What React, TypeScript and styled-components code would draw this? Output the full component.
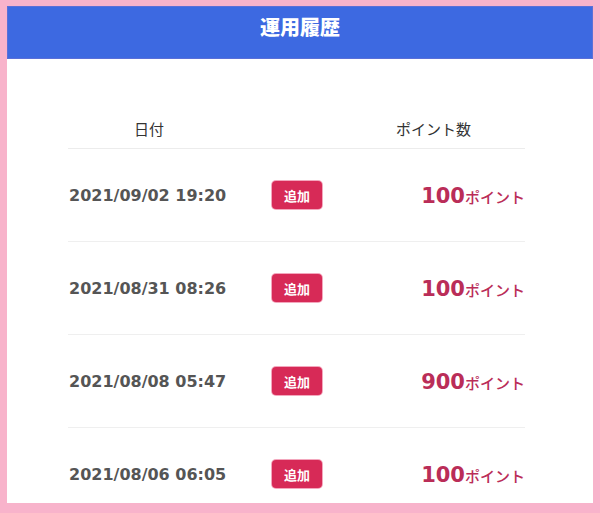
import React from "react";
import styled, { createGlobalStyle } from "styled-components";

const GlobalStyle = createGlobalStyle`
  html, body { margin: 0; padding: 0; }
  body {
    background: #f8b3cb;
    font-family: "Noto Sans CJK JP", "Noto Sans", sans-serif;
  }
`;

const Frame = styled.div`
  box-sizing: border-box;
  width: 600px;
  height: 513px;
  padding: 6px 7px 10px 7px;
  background: #f8b3cb;
`;

const Panel = styled.div`
  height: 100%;
  background: #ffffff;
  overflow: hidden;
  display: flex;
  flex-direction: column;
`;

const Header = styled.header`
  height: 53px;
  flex: none;
  background: #3d69e1;
  border: 1px solid #5a6fd8;
  box-sizing: border-box;
  display: flex;
  justify-content: center;
  align-items: flex-start;
  padding-top: 6px;
`;

const Title = styled.h1`
  margin: 0;
  color: #ffffff;
  font-family: "Noto Sans CJK JP", sans-serif;
  font-weight: 900;
  font-size: 20px;
  line-height: 28px;
`;

const Table = styled.div`
  margin: 51px 68px 0 61px;
`;

const HeadRow = styled.div`
  display: grid;
  grid-template-columns: 162px 1fr 183px;
  height: 39px;
  align-items: center;
  border-bottom: 1px solid #ececec;
  box-sizing: border-box;
`;

const HeadCell = styled.div<{ $col: number }>`
  grid-column: ${(p) => p.$col};
  text-align: center;
  font-family: "Noto Sans CJK JP", sans-serif;
  font-size: 15px;
  color: #333333;
  padding-bottom: 2px;
`;

const Row = styled.div`
  display: grid;
  grid-template-columns: 162px 1fr 183px;
  height: 93px;
  align-items: center;
  border-bottom: 1px solid #efefef;
  box-sizing: border-box;
`;

const DateCell = styled.div`
  padding-left: 1px;
  font-family: "DejaVu Sans", Verdana, sans-serif;
  font-weight: 700;
  font-size: 16px;
  color: #555555;
  white-space: nowrap;
`;

const Badge = styled.span`
  justify-self: start;
  margin-left: 42px;
  width: 50px;
  height: 28px;
  border-radius: 4px;
  background: #d72a57;
  box-shadow: 0 0 0 1px #f3a7bd;
  color: #ffffff;
  font-family: "Noto Sans CJK JP", sans-serif;
  font-weight: 700;
  font-size: 13px;
  display: flex;
  align-items: center;
  justify-content: center;
`;

const Points = styled.div`
  text-align: right;
  color: #ba2d58;
  white-space: nowrap;
  padding-top: 2px;
`;

const Amount = styled.span`
  font-family: "DejaVu Sans", Verdana, sans-serif;
  font-weight: 700;
  font-size: 21px;
`;

const Unit = styled.span`
  font-family: "Noto Sans CJK JP", sans-serif;
  font-size: 15px;
  font-weight: 500;
`;

const rows = [
  { date: "2021/09/02 19:20", amount: 100 },
  { date: "2021/08/31 08:26", amount: 100 },
  { date: "2021/08/08 05:47", amount: 900 },
  { date: "2021/08/06 06:05", amount: 100 },
];

export default function App() {
  return (
    <>
      <GlobalStyle />
      <Frame>
        <Panel>
          <Header>
            <Title>運用履歴</Title>
          </Header>
          <Table>
            <HeadRow>
              <HeadCell $col={1}>日付</HeadCell>
              <HeadCell $col={3}>ポイント数</HeadCell>
            </HeadRow>
            {rows.map((r) => (
              <Row key={r.date}>
                <DateCell>{r.date}</DateCell>
                <Badge>追加</Badge>
                <Points>
                  <Amount>{r.amount}</Amount>
                  <Unit>ポイント</Unit>
                </Points>
              </Row>
            ))}
          </Table>
        </Panel>
      </Frame>
    </>
  );
}
